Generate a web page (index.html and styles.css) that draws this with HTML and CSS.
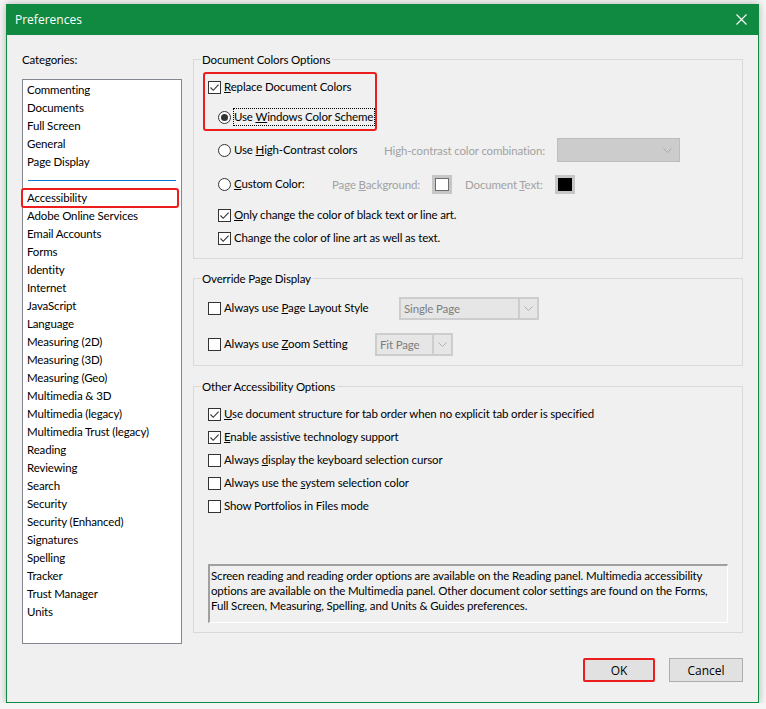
FILE: index.html
```html
<!DOCTYPE html>
<html>
<head>
<meta charset="utf-8">
<title>Preferences</title>
<link rel="stylesheet" href="styles.css">
</head>
<body>
<div class="window">
  <div class="titlebar">
    <span class="title">Preferences</span>
    <svg class="close" width="11" height="11" viewBox="0 0 11 11"><path d="M0.5 0.5L10.5 10.5M10.5 0.5L0.5 10.5" stroke="#fff" stroke-width="1.1" fill="none"/></svg>
  </div>
  <div class="content">
    <div class="main">
      <div class="left">
        <div class="cat-label">Categories:</div>
        <ul class="catlist">
          <li>Commenting</li>
          <li>Documents</li>
          <li>Full Screen</li>
          <li>General</li>
          <li>Page Display</li>
          <li class="sep"></li>
          <li class="current">Accessibility</li>
          <li>Adobe Online Services</li>
          <li>Email Accounts</li>
          <li>Forms</li>
          <li>Identity</li>
          <li>Internet</li>
          <li>JavaScript</li>
          <li>Language</li>
          <li>Measuring (2D)</li>
          <li>Measuring (3D)</li>
          <li>Measuring (Geo)</li>
          <li>Multimedia &amp; 3D</li>
          <li>Multimedia (legacy)</li>
          <li>Multimedia Trust (legacy)</li>
          <li>Reading</li>
          <li>Reviewing</li>
          <li>Search</li>
          <li>Security</li>
          <li>Security (Enhanced)</li>
          <li>Signatures</li>
          <li>Spelling</li>
          <li>Tracker</li>
          <li>Trust Manager</li>
          <li>Units</li>
        </ul>
      </div>
      <div class="right">
        <section class="group g1">
          <div class="group-head"><span>Document Colors Options</span></div>
          <div class="group-body">
            <div class="highlight">
              <div class="opt r-replace"><span class="cb"><svg width="11" height="11" viewBox="0 0 11 11"><path d="M1.5 5.5L4.2 8.3L9.6 2.6" fill="none" stroke="#333" stroke-width="1.1"/></svg></span><span class="lbl"><u>R</u>eplace Document Colors</span></div>
              <div class="opt r-radio r-windows"><span class="rb on"></span><span class="rlbl focus">Use <u>W</u>indows Color Scheme</span></div>
            </div>
            <div class="row r-hc">
              <div class="opt r-radio hc-choice"><span class="rb"></span><span class="rlbl">Use <u>H</u>igh-Contrast colors</span></div>
              <span class="dis hc-label">High-contrast color combination:</span>
              <span class="select-dis"><svg width="9" height="5" viewBox="0 0 9 5"><path d="M0.5 0.5L4.5 4.5L8.5 0.5" fill="none" stroke="#a8a8a8"/></svg></span>
            </div>
            <div class="row r-custom">
              <div class="opt r-radio custom-choice"><span class="rb"></span><span class="rlbl"><u>C</u>ustom Color:</span></div>
              <span class="dis bg-label">Page <u>B</u>ackground:</span>
              <span class="swatch"><span class="fill white"></span></span>
              <span class="dis text-label">Document <u>T</u>ext:</span>
              <span class="swatch"><span class="fill black"></span></span>
            </div>
            <div class="opt indent r-only"><span class="cb"><svg width="11" height="11" viewBox="0 0 11 11"><path d="M1.5 5.5L4.2 8.3L9.6 2.6" fill="none" stroke="#333" stroke-width="1.1"/></svg></span><span class="lbl"><u>O</u>nly change the color of black text or line art.</span></div>
            <div class="opt indent r-change"><span class="cb"><svg width="11" height="11" viewBox="0 0 11 11"><path d="M1.5 5.5L4.2 8.3L9.6 2.6" fill="none" stroke="#333" stroke-width="1.1"/></svg></span><span class="lbl">Chan<u>g</u>e the color of line art as well as text.</span></div>
          </div>
        </section>

        <section class="group g2">
          <div class="group-head"><span>Override Page Display</span></div>
          <div class="group-body">
            <div class="row r-layout">
              <div class="opt layout-choice"><span class="cb"></span><span class="lbl">Always use <u>P</u>age Layout Style</span></div>
              <span class="combo layout-combo"><span class="field">Single Page</span><span class="btn"><svg width="9" height="5" viewBox="0 0 9 5"><path d="M0.5 0.5L4.5 4.5L8.5 0.5" fill="none" stroke="#b0b0b0"/></svg></span></span>
            </div>
            <div class="row r-zoom">
              <div class="opt zoom-choice"><span class="cb"></span><span class="lbl">Always use <u>Z</u>oom Setting</span></div>
              <span class="combo zoom-combo"><span class="field">Fit Page</span><span class="btn"><svg width="9" height="5" viewBox="0 0 9 5"><path d="M0.5 0.5L4.5 4.5L8.5 0.5" fill="none" stroke="#b0b0b0"/></svg></span></span>
            </div>
          </div>
        </section>

        <section class="group g3">
          <div class="group-head"><span>Other Accessibility Options</span></div>
          <div class="group-body">
            <div class="opt line first"><span class="cb"><svg width="11" height="11" viewBox="0 0 11 11"><path d="M1.5 5.5L4.2 8.3L9.6 2.6" fill="none" stroke="#333" stroke-width="1.1"/></svg></span><span class="lbl"><u>U</u>se document structure for tab order when no explicit tab order is specified</span></div>
            <div class="opt line"><span class="cb"><svg width="11" height="11" viewBox="0 0 11 11"><path d="M1.5 5.5L4.2 8.3L9.6 2.6" fill="none" stroke="#333" stroke-width="1.1"/></svg></span><span class="lbl"><u>E</u>nable assistive technology support</span></div>
            <div class="opt line"><span class="cb"></span><span class="lbl">Always <u>d</u>isplay the keyboard selection cursor</span></div>
            <div class="opt line"><span class="cb"></span><span class="lbl">Always use the <u>s</u>ystem selection color</span></div>
            <div class="opt line"><span class="cb"></span><span class="lbl">Show Portfolios in Files mode</span></div>
            <div class="info">Screen reading and reading order options are available on the Reading panel. Multimedia accessibility options are available on the Multimedia panel. Other document color settings are found on the Forms, Full Screen, Measuring, Spelling, and Units &amp; Guides preferences.</div>
          </div>
        </section>
      </div>
    </div>
    <div class="buttons">
      <button class="btn-ok">OK</button>
      <button class="btn-cancel">Cancel</button>
    </div>
  </div>
</div>
</body>
</html>
```

FILE: styles.css
```css
html, body {
  margin: 0;
  padding: 0;
}

body {
  background: #f5f5f5;
  font-family: Lato, "Open Sans", sans-serif;
  font-size: 11.5px;
  letter-spacing: -0.15px;
  color: #000;
}

.window {
  margin: 4px 0 0 6px;
  width: 753px;
  height: 699px;
  box-sizing: border-box;
  border: 1px solid #118a41;
  border-top: none;
  background: #f0f0f0;
  box-shadow: 0 0 8px rgba(0, 0, 0, 0.28);
  display: flex;
  flex-direction: column;
}

.titlebar {
  height: 31px;
  margin: 0 -1px;
  padding: 0 12px 0 9px;
  background: #118a41;
  display: flex;
  align-items: center;
  justify-content: space-between;
  flex-shrink: 0;
}

.title {
  color: #fff;
  font-family: "Open Sans", "Noto Sans", sans-serif;
  font-size: 12px;
  letter-spacing: 0;
}

.close {
  display: block;
}

.content {
  flex: 1;
  padding: 17px 15px 20px;
  display: flex;
  flex-direction: column;
}

.main {
  display: flex;
  gap: 11px;
  height: 592px;
}

.left {
  width: 160px;
  display: flex;
  flex-direction: column;
}

.cat-label {
  height: 16px;
  line-height: 16px;
}

.catlist {
  list-style: none;
  margin: 11px 0 0;
  padding: 1px 0 0;
  height: 565px;
  box-sizing: border-box;
  border: 1px solid #828790;
  background: #fff;
}

.catlist li {
  height: 18px;
  line-height: 18px;
  padding-left: 4px;
  white-space: nowrap;
}

.catlist .sep {
  display: flex;
  align-items: center;
  padding: 0 5px;
}

.catlist .sep::before {
  content: "";
  flex: 1;
  border-top: 1px solid #0a78d4;
}

.catlist .current {
  position: relative;
}

.catlist .current::after {
  content: "";
  position: absolute;
  left: -2px;
  right: 2px;
  top: -1px;
  bottom: -1px;
  border: 2px solid #ee1d1d;
  border-radius: 3px;
}

.right {
  width: 550px;
  display: flex;
  flex-direction: column;
}

/* group boxes */
.group-head {
  height: 15px;
  display: flex;
  line-height: 15px;
}

.group-head::before,
.group-head::after {
  content: "";
  align-self: flex-end;
  height: 8px;
  box-sizing: border-box;
  border-top: 1px solid #d9d9d9;
}

.group-head::before {
  width: 8px;
  border-left: 1px solid #d9d9d9;
}

.group-head::after {
  flex: 1;
  border-right: 1px solid #d9d9d9;
}

.group-head span {
  padding: 0 2px 0 1px;
  white-space: nowrap;
}

.group-body {
  border: 1px solid #d9d9d9;
  border-top: none;
  box-sizing: border-box;
}

.g1 .group-body {
  height: 192px;
  padding: 5px 0 0 9px;
}

.g2 {
  margin-top: 12px;
}

.g2 .group-body {
  height: 80px;
  padding: 10px 0 0 14px;
}

.g3 {
  margin-top: 13px;
}

.g3 .group-body {
  height: 239px;
  padding: 10px 14px 0 14px;
}

/* options */
.opt {
  display: flex;
  align-items: center;
  white-space: nowrap;
}

.row {
  display: flex;
  align-items: center;
  white-space: nowrap;
}

.cb {
  width: 13px;
  height: 13px;
  box-sizing: border-box;
  border: 1px solid #333;
  background: #fff;
  flex-shrink: 0;
  margin-right: 3px;
  display: flex;
}

.cb svg {
  display: block;
}

.rb {
  width: 13px;
  height: 13px;
  box-sizing: border-box;
  border: 1px solid #333;
  border-radius: 50%;
  background: #fff;
  flex-shrink: 0;
  margin-right: 2px;
  display: flex;
  align-items: center;
  justify-content: center;
}

.rb.on::after {
  content: "";
  width: 7px;
  height: 7px;
  border-radius: 50%;
  background: #333;
}

.rlbl {
  border: 1px solid transparent;
  line-height: 16px;
  padding-right: 1px;
}

.rlbl.focus {
  border: 1px dotted #000;
}

.lbl {
  line-height: 16px;
}

.highlight {
  width: 174px;
  box-sizing: border-box;
  border: 2px solid #ee1d1d;
  border-radius: 3px;
  padding: 2px 0 1px 3px;
}

.r-replace {
  height: 22px;
}

.r-windows {
  height: 22px;
  margin-top: 8px;
  padding-left: 10px;
}

.r-hc {
  height: 24px;
  margin-top: 7px;
  padding-left: 15px;
}

.hc-choice {
  width: 166px;
}

.hc-label {
  width: 173px;
}

.dis {
  color: #a2a2a2;
}

.select-dis {
  width: 123px;
  height: 24px;
  box-sizing: border-box;
  background: #cccccc;
  border: 1px solid #bdbdbd;
  display: flex;
  align-items: center;
  justify-content: flex-end;
  padding-right: 7px;
}

.r-custom {
  height: 24px;
  margin-top: 10px;
  padding-left: 15px;
}

.custom-choice {
  width: 114px;
}

.bg-label {
  width: 100px;
}

.text-label {
  width: 90px;
  margin-left: 13px;
}

.swatch {
  width: 20px;
  height: 19px;
  box-sizing: border-box;
  background: #c6c6c6;
  padding: 3px;
  display: flex;
}

.fill {
  flex: 1;
  box-sizing: border-box;
  border: 1px solid #6d6d6d;
}

.fill.white {
  background: #fff;
}

.fill.black {
  background: #000;
  border-color: #000;
}

.indent {
  padding-left: 15px;
}

.r-only {
  height: 20px;
  margin-top: 9px;
}

.r-change {
  height: 20px;
  margin-top: 3px;
}

.r-layout {
  height: 24px;
}

.r-zoom {
  height: 24px;
  margin-top: 12px;
}

.layout-choice {
  width: 191px;
}

.zoom-choice {
  width: 167px;
}

.combo {
  height: 23px;
  box-sizing: border-box;
  background: #cdcdcd;
  padding: 2px;
  display: flex;
  gap: 2px;
  color: #7d7d7d;
}

.combo .field {
  flex: 1;
  background: #e6e6e6;
  line-height: 19px;
  padding-left: 3px;
}

.combo .btn {
  width: 17px;
  background: #e6e6e6;
  display: flex;
  align-items: center;
  justify-content: center;
}

.layout-combo {
  width: 140px;
}

.zoom-combo {
  width: 78px;
}

.line {
  height: 20px;
  margin-top: 3px;
}

.line.first {
  margin-top: 0;
}

.info {
  margin-top: 48px;
  height: 59px;
  box-sizing: border-box;
  border-top: 2px solid #a0a0a0;
  border-left: 2px solid #a0a0a0;
  border-right: 1px solid #fff;
  border-bottom: 1px solid #fff;
  padding: 2px 4px 0 1px;
  line-height: 15px;
}

/* buttons */
.buttons {
  margin-top: 14px;
  display: flex;
  justify-content: flex-end;
  gap: 14px;
}

.buttons button {
  height: 24px;
  box-sizing: border-box;
  background: #e1e1e1;
  border: 1px solid #adadad;
  font-family: "Open Sans", "Noto Sans", sans-serif;
  font-size: 12px;
  color: #000;
  padding: 0;
}

.btn-ok {
  width: 72px;
  border: 2px solid #ee1d1d !important;
  border-radius: 2px;
}

.btn-cancel {
  width: 74px;
}
```
